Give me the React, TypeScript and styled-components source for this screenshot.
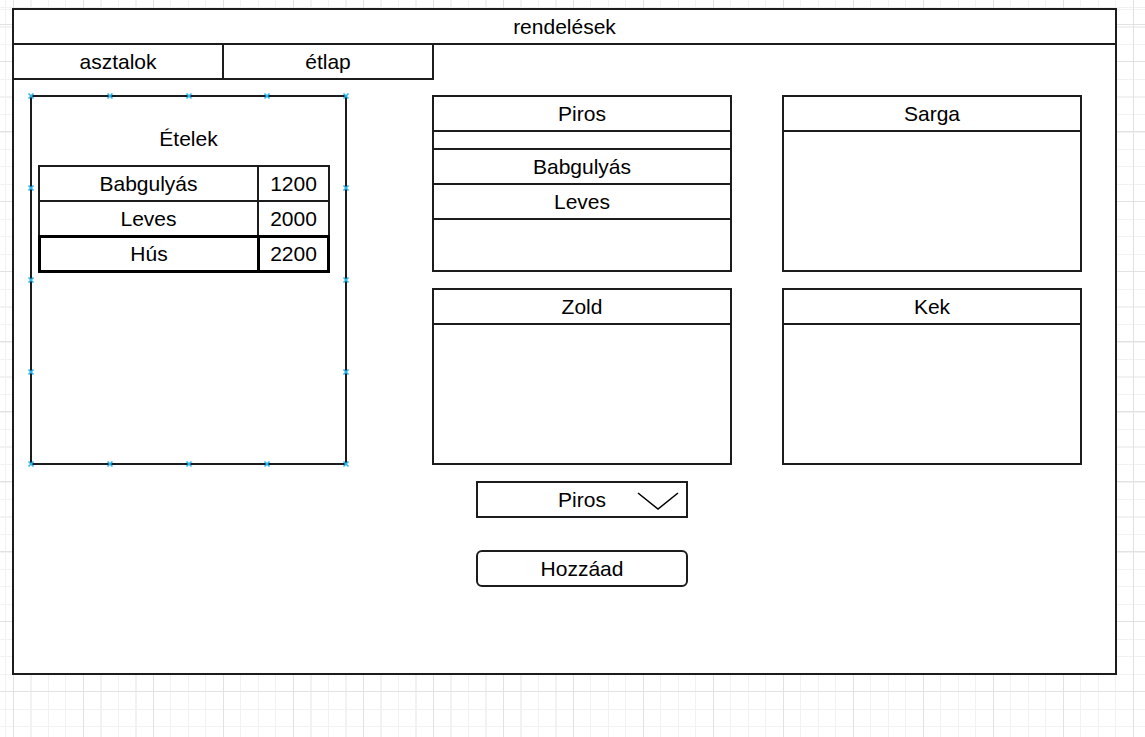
import React from "react";
import styled, { createGlobalStyle } from "styled-components";

const LINE = "#1c1c1c";

const GlobalStyle = createGlobalStyle`
  * { box-sizing: border-box; }
  html, body { margin: 0; padding: 0; }
  body {
    width: 1145px;
    height: 737px;
    overflow: hidden;
    font-family: "Liberation Sans", Arial, Helvetica, sans-serif;
    color: #000;
    background-color: #fff;
    background-image:
      repeating-linear-gradient(to right, #e2e2e2 0 1px, transparent 1px 70px),
      repeating-linear-gradient(to bottom, #e2e2e2 0 1px, transparent 1px 70px),
      repeating-linear-gradient(to right, #f2f2f2 0 1px, transparent 1px 17.5px),
      repeating-linear-gradient(to bottom, #f2f2f2 0 1px, transparent 1px 17.5px);
    background-position: 13px 61px, 13px 61px, 13px 9px, 13px 9px;
  }
`;

const Frame = styled.main`
  margin: 8px 0 0 12px;
  width: 1105px;
  height: 667px;
  border: 2px solid ${LINE};
  background: #fff;
  display: flex;
  flex-direction: column;
`;

const TitleBar = styled.header`
  height: 35px;
  border-bottom: 2px solid ${LINE};
  display: flex;
  align-items: center;
  justify-content: center;
  font-size: 21px;
`;

const Tabs = styled.nav`
  display: flex;
`;

const Tab = styled.div`
  width: 210px;
  height: 35px;
  border-right: 2px solid ${LINE};
  border-bottom: 2px solid ${LINE};
  display: flex;
  align-items: center;
  justify-content: center;
  font-size: 21px;
`;

const Content = styled.section`
  display: flex;
  align-items: flex-start;
  padding: 15px 0 0 16px;
`;

const FoodPanel = styled.div`
  position: relative;
  width: 317px;
  height: 370px;
  border: 2px solid ${LINE};
  padding-top: 30px;
`;

const PanelTitle = styled.div`
  text-align: center;
  font-size: 21px;
  line-height: 24px;
  margin-bottom: 14px;
`;

const FoodTable = styled.table`
  margin-left: 6px;
  border-collapse: separate;
  border-spacing: 0;
  font-size: 21px;
`;

const Cell = styled.td<{ $wide?: boolean; $strong?: boolean; $last?: boolean }>`
  box-sizing: border-box;
  width: ${(p) => (p.$wide ? "219px" : "73px")};
  height: ${(p) => (p.$strong ? "38px" : "35px")};
  padding: 0;
  text-align: center;
  vertical-align: middle;
  border-top: ${(p) => (p.$strong ? "3px solid #000" : `2px solid ${LINE}`)};
  border-left: ${(p) => (p.$strong ? "3px solid #000" : `2px solid ${LINE}`)};
  border-right: ${(p) =>
    p.$last ? (p.$strong ? "3px solid #000" : `2px solid ${LINE}`) : "none"};
  border-bottom: ${(p) => (p.$strong ? "3px solid #000" : "none")};
`;

const HandleLayer = styled.div`
  position: absolute;
  inset: -1px;
  pointer-events: none;
`;

const Handle = styled.svg<{ $x: number; $y: number }>`
  position: absolute;
  left: ${(p) => p.$x}%;
  top: ${(p) => p.$y}%;
  width: 8px;
  height: 8px;
  transform: translate(-50%, -50%);
  overflow: visible;
`;

const RightSection = styled.div`
  margin-left: 85px;
  display: flex;
  flex-direction: column;
`;

const TableGrid = styled.div`
  display: grid;
  grid-template-columns: 300px 300px;
  column-gap: 50px;
  row-gap: 16px;
`;

const Box = styled.div`
  width: 300px;
  height: 177px;
  border: 2px solid ${LINE};
  display: flex;
  flex-direction: column;
`;

const BoxRow = styled.div<{ $spacer?: boolean }>`
  height: ${(p) => (p.$spacer ? "18px" : "35px")};
  flex: none;
  border-bottom: 2px solid ${LINE};
  display: flex;
  align-items: center;
  justify-content: center;
  font-size: 21px;
`;

const Controls = styled.div`
  display: flex;
  flex-direction: column;
  gap: 32px;
  margin: 16px 0 0 44px;
`;

const Select = styled.div`
  width: 212px;
  height: 37px;
  border: 2px solid ${LINE};
  display: grid;
  grid-template-columns: 1fr auto 1fr;
  align-items: center;
  font-size: 21px;
`;

const SelectValue = styled.span`
  grid-column: 2;
`;

const Chevron = styled.svg`
  grid-column: 3;
  justify-self: end;
  margin: 3px 7px 0 0;
  width: 42px;
  height: 18px;
`;

const Button = styled.button`
  width: 212px;
  height: 37px;
  border: 2px solid ${LINE};
  border-radius: 6px;
  background: #fff;
  font-family: inherit;
  font-size: 21px;
  color: #000;
  padding: 0;
`;

const foods = [
  { name: "Babgulyás", price: 1200 },
  { name: "Leves", price: 2000 },
  { name: "Hús", price: 2200, strong: true },
];

const handles: [number, number][] = [
  [0, 0], [25, 0], [50, 0], [75, 0], [100, 0],
  [0, 25], [100, 25], [0, 50], [100, 50], [0, 75], [100, 75],
  [0, 100], [25, 100], [50, 100], [75, 100], [100, 100],
];

const tables = [
  { name: "Piros", items: ["Babgulyás", "Leves"] },
  { name: "Sarga", items: [] as string[] },
  { name: "Zold", items: [] as string[] },
  { name: "Kek", items: [] as string[] },
];

export default function App() {
  return (
    <>
      <GlobalStyle />
      <Frame>
        <TitleBar>rendelések</TitleBar>
        <Tabs>
          <Tab>asztalok</Tab>
          <Tab>étlap</Tab>
        </Tabs>
        <Content>
          <FoodPanel>
            <PanelTitle>Ételek</PanelTitle>
            <FoodTable>
              <tbody>
                {foods.map((f) => (
                  <tr key={f.name}>
                    <Cell $wide $strong={f.strong}>{f.name}</Cell>
                    <Cell $last $strong={f.strong}>{f.price}</Cell>
                  </tr>
                ))}
              </tbody>
            </FoodTable>
            <HandleLayer>
              {handles.map(([x, y]) => (
                <Handle key={`${x}-${y}`} $x={x} $y={y} viewBox="0 0 8 8">
                  <path d="M1.5 1.5 L6.5 6.5 M6.5 1.5 L1.5 6.5" stroke="#29b6f2" strokeWidth="1.6" fill="none" />
                </Handle>
              ))}
            </HandleLayer>
          </FoodPanel>
          <RightSection>
            <TableGrid>
              {tables.map((t) => (
                <Box key={t.name}>
                  <BoxRow>{t.name}</BoxRow>
                  {t.items.length > 0 && <BoxRow $spacer />}
                  {t.items.map((it) => (
                    <BoxRow key={it}>{it}</BoxRow>
                  ))}
                </Box>
              ))}
            </TableGrid>
            <Controls>
              <Select>
                <SelectValue>Piros</SelectValue>
                <Chevron viewBox="0 0 42 18">
                  <path d="M1 1 L21 17 L41 1" stroke="#000" strokeWidth="1.6" fill="none" />
                </Chevron>
              </Select>
              <Button type="button">Hozzáad</Button>
            </Controls>
          </RightSection>
        </Content>
      </Frame>
    </>
  );
}
